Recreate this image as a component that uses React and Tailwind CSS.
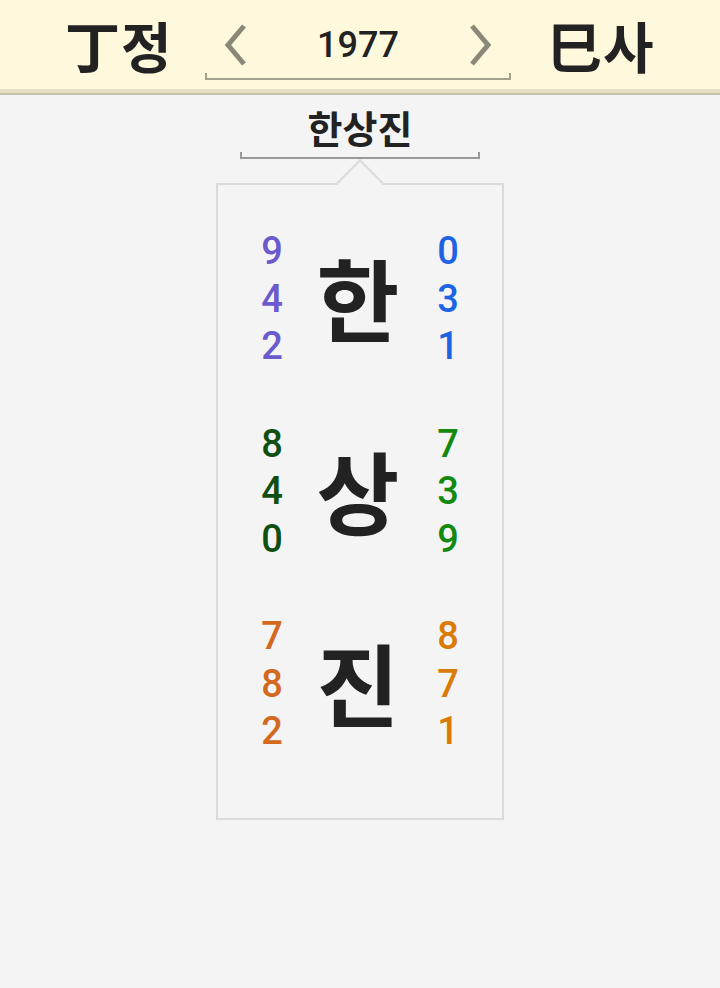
import React from "react";

const FONT = { fontFamily: '"Noto Sans CJK KR", "Noto Sans", sans-serif' };
const DIGITS = { fontFamily: 'Roboto, "Noto Sans CJK KR", sans-serif' };

const rows = [
  { char: "한", left: ["9", "4", "2"], right: ["0", "3", "1"], lc: "text-[#6a5acd]", rc: "text-[#1d63e3]" },
  { char: "상", left: ["8", "4", "0"], right: ["7", "3", "9"], lc: "text-[#0f4f12]", rc: "text-[#13890f]" },
  { char: "진", left: ["7", "8", "2"], right: ["8", "7", "1"], lc: "text-[#d2691e]", rc: "text-[#d97b06]" },
];

const Chevron = ({ dir }) => (
  <svg width="26" height="44" viewBox="0 0 26 44" className="text-[#8a8878]">
    <path
      d={dir === "left" ? "M21 3 L5 22 L21 41" : "M5 3 L21 22 L5 41"}
      fill="none"
      stroke="currentColor"
      strokeWidth="5"
    />
  </svg>
);

const NumCol = ({ nums, color }) => (
  <div
    className={`flex w-10 flex-col items-center text-[38px] font-medium leading-[47.5px] ${color}`}
    style={DIGITS}
  >
    {nums.map((n, i) => (
      <span key={i}>{n}</span>
    ))}
  </div>
);

export default function App() {
  return (
    <div className="min-h-screen bg-[#f4f4f4] text-[#222]" style={FONT}>
      <header className="bg-[#fef8dc]">
        <div className="flex h-[89px] items-center justify-center">
          <div className="w-[108px] whitespace-nowrap text-[55px] font-bold leading-none tracking-[1px]">
            丁정
          </div>
          <div className="ml-[32px] mr-[36px] flex w-[306px] shrink-0 flex-col pt-[14px]">
            <div className="flex items-center justify-between px-[18px]">
              <Chevron dir="left" />
              <span className="text-[36px] font-medium leading-none" style={DIGITS}>
                1977
              </span>
              <Chevron dir="right" />
            </div>
            <div className="mt-[6px] h-[7px] border-x-2 border-b-2 border-[#a3a08c]" />
          </div>
          <div className="w-[108px] whitespace-nowrap text-[55px] font-bold leading-none tracking-[1px]">
            巳사
          </div>
        </div>
        <div className="h-[4px] bg-[#e6dfc4]" />
        <div className="h-[2px] bg-[#c6c0a9]" />
      </header>

      <div className="flex flex-col items-center">
        <div className="mt-[7px] text-[38px] font-bold leading-[50px]">한상진</div>
        <div className="h-[7px] w-[240px] border-x-2 border-b-2 border-[#999]" />

        <div className="relative mt-[24px] w-[288px] border-2 border-[#dadada] pb-[62px] pt-[43px]">
          <div className="absolute left-1/2 top-[-19px] h-[34px] w-[34px] -translate-x-1/2 rotate-45 border-l-2 border-t-2 border-[#dadada] bg-[#f4f4f4]" />
          <div className="flex flex-col gap-[50px]">
            {rows.map((r) => (
              <div key={r.char} className="flex items-center justify-center">
                <NumCol nums={r.left} color={r.lc} />
                <div className="ml-[18px] mr-[22px] w-[96px] -translate-y-[3px] text-center text-[90px] font-bold leading-none">
                  {r.char}
                </div>
                <NumCol nums={r.right} color={r.rc} />
              </div>
            ))}
          </div>
        </div>
      </div>
    </div>
  );
}
